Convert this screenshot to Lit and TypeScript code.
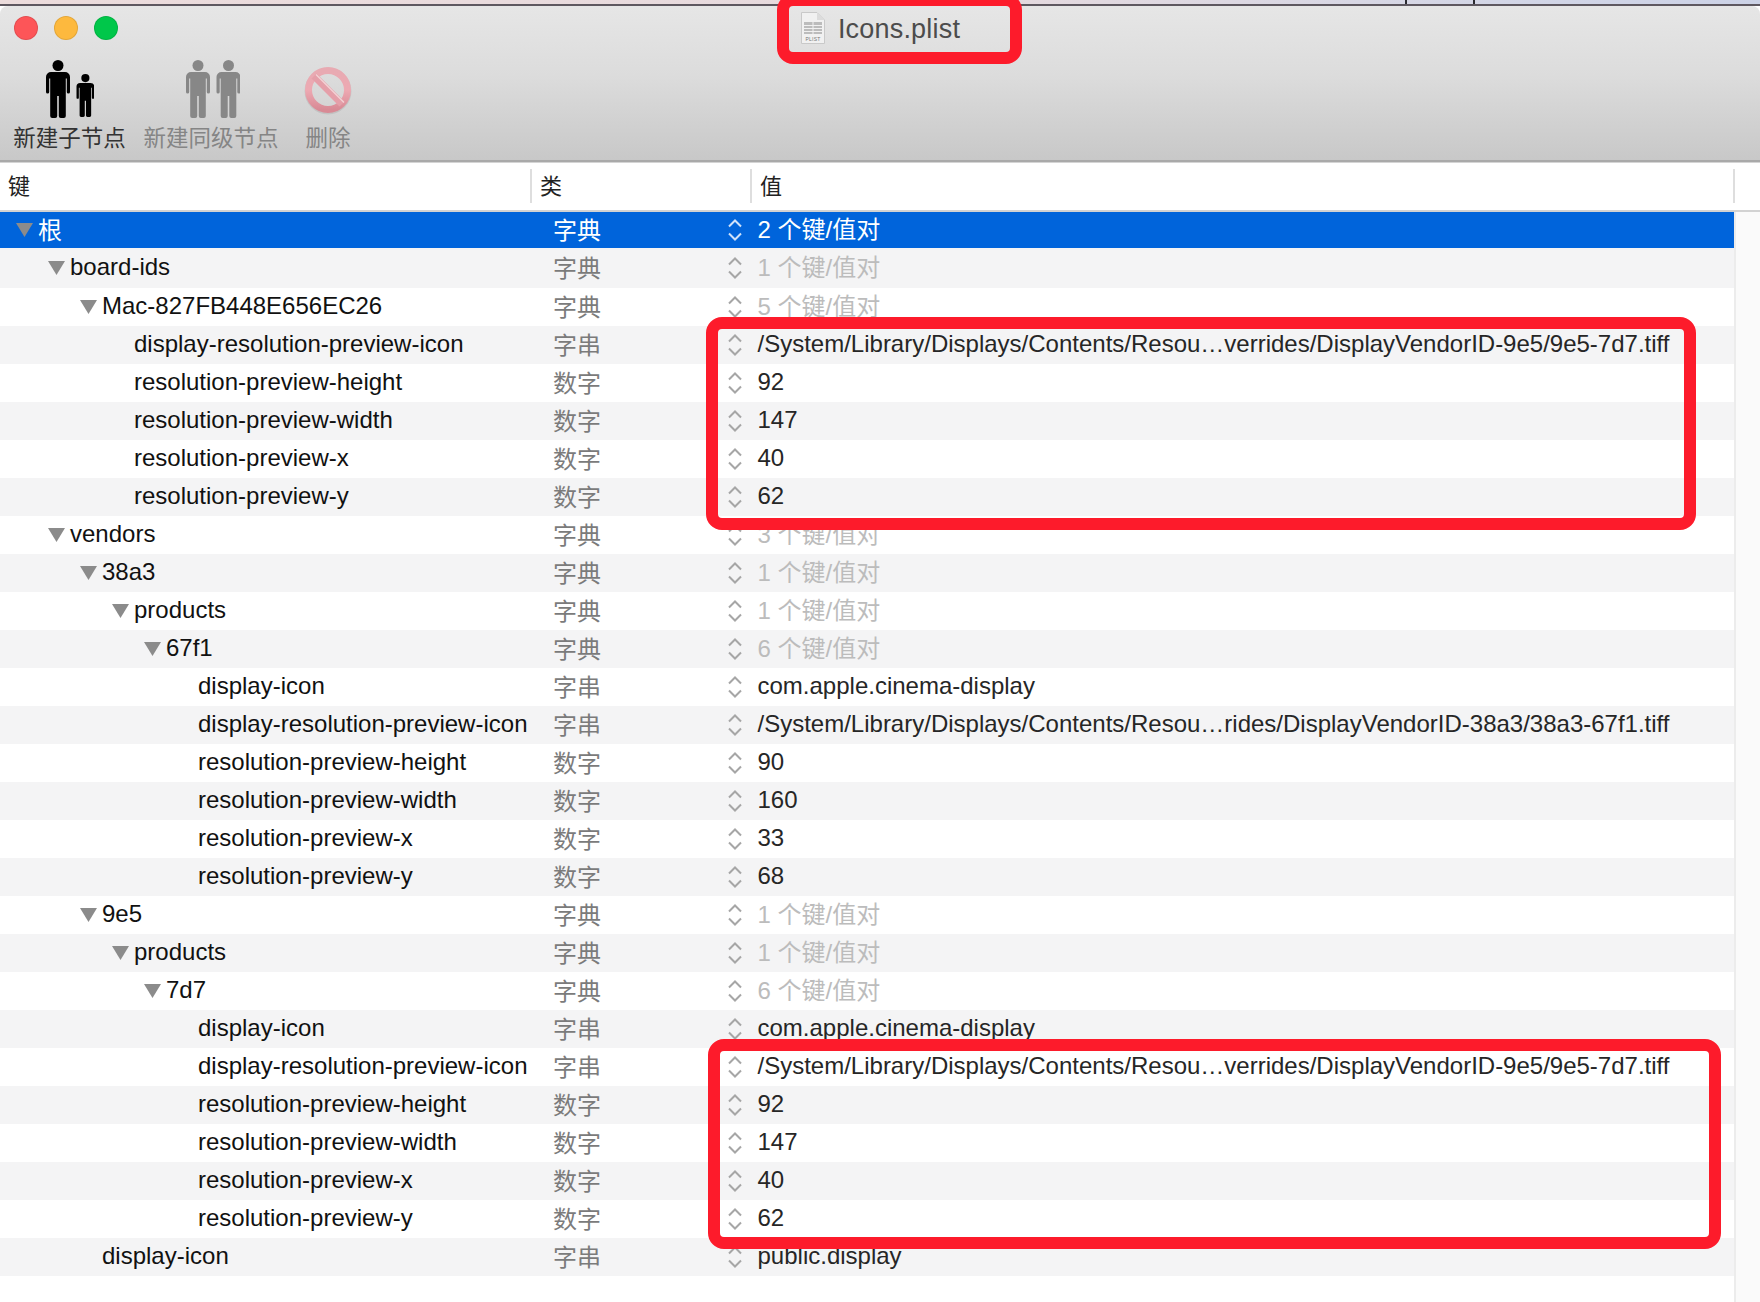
import { LitElement, html, css, svg } from "lit";
import { customElement } from "lit/decorators.js";

type Row = { level: number; open?: boolean; key: string; type: string; value: string; muted?: boolean };

const PATH_9E5 = "/System/Library/Displays/Contents/Resou…verrides/DisplayVendorID-9e5/9e5-7d7.tiff";
const PATH_38A3 = "/System/Library/Displays/Contents/Resou…rides/DisplayVendorID-38a3/38a3-67f1.tiff";
const DICT = "字典";
const STR = "字串";
const NUM = "数字";

const preview = (level: number, path: string, h: string, w: string, x: string, y: string): Row[] => [
    { level, key: "display-resolution-preview-icon", type: STR, value: path },
    { level, key: "resolution-preview-height", type: NUM, value: h },
    { level, key: "resolution-preview-width", type: NUM, value: w },
    { level, key: "resolution-preview-x", type: NUM, value: x },
    { level, key: "resolution-preview-y", type: NUM, value: y },
];

const ROWS: Row[] = [
    { level: 0, open: true, key: "根", type: DICT, value: "2 个键/值对" },
    { level: 1, open: true, key: "board-ids", type: DICT, value: "1 个键/值对", muted: true },
    { level: 2, open: true, key: "Mac-827FB448E656EC26", type: DICT, value: "5 个键/值对", muted: true },
    ...preview(3, PATH_9E5, "92", "147", "40", "62"),
    { level: 1, open: true, key: "vendors", type: DICT, value: "3 个键/值对", muted: true },
    { level: 2, open: true, key: "38a3", type: DICT, value: "1 个键/值对", muted: true },
    { level: 3, open: true, key: "products", type: DICT, value: "1 个键/值对", muted: true },
    { level: 4, open: true, key: "67f1", type: DICT, value: "6 个键/值对", muted: true },
    { level: 5, key: "display-icon", type: STR, value: "com.apple.cinema-display" },
    ...preview(5, PATH_38A3, "90", "160", "33", "68"),
    { level: 2, open: true, key: "9e5", type: DICT, value: "1 个键/值对", muted: true },
    { level: 3, open: true, key: "products", type: DICT, value: "1 个键/值对", muted: true },
    { level: 4, open: true, key: "7d7", type: DICT, value: "6 个键/值对", muted: true },
    { level: 5, key: "display-icon", type: STR, value: "com.apple.cinema-display" },
    ...preview(5, PATH_9E5, "92", "147", "40", "62"),
    { level: 2, key: "display-icon", type: STR, value: "public.display" },
];

const PERSON = "M5 12h14a5 5 0 0 1 5 5v15a1.6 1.6 0 0 1-3.2 0V18.5h-1V56a2 2 0 0 1-2 2h-3a2 2 0 0 1-2-2V36h-1.6V56a2 2 0 0 1-2 2h-3a2 2 0 0 1-2-2V18.5h-1V32a1.6 1.6 0 0 1-3.2 0V17a5 5 0 0 1 5-5z";

const person = (x: number, y: number, scale: number) => svg`
  <g transform="translate(${x} ${y}) scale(${scale})">
    <circle cx="12" cy="5.5" r="5.5"></circle>
    <path d=${PERSON}></path>
  </g>`;

@customElement("app-root")
export class AppRoot extends LitElement {
    static styles = css`
    :host {
      display: block;
      position: relative;
      width: 1760px;
      height: 1302px;
      overflow: hidden;
      background: #fff;
      font-family: "Liberation Sans", "Noto Sans CJK SC", sans-serif;
    }

    .desk {
      height: 4px;
      display: flex;
      background: linear-gradient(90deg, #ecdcdc 0%, #e6dade 55%, #d3d6e6 85%, #ccd2e6 100%);
    }

    .desk-frame {
      width: 66px;
      margin-left: 1405px;
      border: solid #2a2a30;
      border-width: 0 2px;
    }

    .edge {
      height: 2px;
      background: #5e5860;
    }

    .toolbar {
      height: 156px;
      box-sizing: border-box;
      border-top-left-radius: 8px;
      border-top-right-radius: 8px;
      background: linear-gradient(180deg, #e6e6e6 0%, #dcdcdc 45%, #c8c8c8 100%);
      border-bottom: 2px solid #a9a9a9;
      box-shadow: 0 1px 0 #d4d4d4;
    }

    .titlebar {
      display: grid;
      grid-template-columns: 1fr auto 1fr;
      align-items: center;
      height: 44px;
    }

    .lights {
      display: flex;
      gap: 16px;
      padding-left: 14px;
    }

    .light {
      width: 22px;
      height: 22px;
      border-radius: 50%;
      border: 1px solid rgba(0, 0, 0, 0.1);
    }

    .red { background: #fd5558; }
    .yellow { background: #fdb93e; }
    .green { background: #00c74a; }

    .title {
      display: flex;
      align-items: center;
      gap: 13px;
      font-size: 27px;
      letter-spacing: 0.2px;
      color: #4c4c4c;
    }

    .title span { padding-top: 2px; }
    .title svg { margin-left: 1px; }

    .tools {
      display: flex;
      padding-left: 14px;
      margin-top: 10px;
    }

    .tool {
      display: flex;
      flex-direction: column;
      align-items: center;
      gap: 4px;
      font-size: 22.5px;
      line-height: 28px;
      white-space: nowrap;
      color: #858585;
      font-family: "Noto Sans CJK SC", sans-serif;
    }

    .tool.active { color: #333; }
    .tool-1 { width: 111px; margin-right: 19px; }
    .tool-2 { width: 134px; margin-right: 14px; }
    .tool-2 svg { margin-left: 4px; }
    .tool-3 { width: 72px; }
    .tool svg { display: block; }

    .header {
      display: grid;
      grid-template-columns: 530px 220px 983px 1fr;
      height: 48px;
      align-items: center;
      font-size: 22px;
      color: #222;
      border-bottom: 2px solid #d2d2d2;
      font-family: "Noto Sans CJK SC", sans-serif;
    }

    .header-cell {
      height: 34px;
      line-height: 30px;
      padding-left: 8px;
      box-sizing: border-box;
    }

    .header-cell + .header-cell {
      border-left: 2px solid #dedede;
    }

    .body {
      display: flex;
      height: 1090px;
    }

    .rows {
      width: 1734px;
    }

    .scroller {
      flex: 1;
      background: #fafafa;
      border-left: 2px solid #ececec;
    }

    .row {
      display: grid;
      grid-template-columns: 553px 175px 29.5px 1fr;
      align-items: center;
      box-sizing: border-box;
      height: 38px;
      padding-bottom: 2px;
      font-size: 24px;
      color: #111;
      white-space: nowrap;
    }

    .row:nth-child(even) { background: #f4f4f5; }
    .row:first-child { height: 36px; }
    .row:nth-child(2) { height: 40px; }

    .row.selected {
      background: #0064db;
      color: #fff;
    }

    .key {
      display: flex;
      align-items: center;
    }

    .selected .key span { margin-top: -2px; }

    .arrow {
      flex: none;
      margin: 2px 5px 0 0;
    }

    .type {
      color: #7b7b7b;
      margin-top: -2px;
    }

    .value { color: #262626; }

    .value.muted {
      color: #bcbcbc;
      margin-top: -4px;
    }

    .selected .type { color: #fff; }

    .selected .value {
      color: #fff;
      margin-top: -4px;
    }

    .stepper {
      display: block;
      stroke: #a6a6a6;
      margin-top: 2px;
    }

    .selected .stepper { stroke: #cfe2fa; }

    .mark {
      position: absolute;
      box-sizing: border-box;
      border: 12px solid #fd1b2b;
      border-radius: 16px;
    }

    .mark-title { left: 777px; top: -6px; width: 245px; height: 70px; }
    .mark-top { left: 706px; top: 317px; width: 990px; height: 213px; }
    .mark-bottom { left: 708px; top: 1039px; width: 1013px; height: 210px; }
  `;

    private docIcon() {
        return html`<svg width="24" height="32" viewBox="0 0 24 32">
      <path d="M.5.5H16L23.5 8V31.5H.5z" fill="#f1f1f1" stroke="#c9c9c9"></path>
      <path d="M16 .5V8H23.5z" fill="#dcdcdc"></path>
      <g fill="#bcbcbc">
        <rect x="3" y="10" width="18" height="3"></rect>
        <rect x="3" y="14" width="18" height="2"></rect>
        <rect x="3" y="17" width="18" height="2"></rect>
        <rect x="3" y="20" width="18" height="2"></rect>
      </g>
      <path d="M12 10V22" stroke="#f1f1f1"></path>
      <text x="12" y="29" text-anchor="middle" font-size="5" fill="#777" font-family="Liberation Sans, sans-serif">PLIST</text>
    </svg>`;
    }

    private noEntryIcon() {
        return html`<svg width="50" height="58" viewBox="0 0 50 58">
      <defs>
        <linearGradient id="ring" x1="0" y1="0" x2="0" y2="1">
          <stop offset="0" stop-color="#e8aab2"></stop>
          <stop offset="0.5" stop-color="#eda9b2"></stop>
          <stop offset="1" stop-color="#d88a95"></stop>
        </linearGradient>
        <filter id="soft" x="-10%" y="-10%" width="120%" height="120%">
          <feGaussianBlur stdDeviation="0.6"></feGaussianBlur>
        </filter>
      </defs>
      <g filter="url(#soft)">
        <circle cx="25" cy="31" r="22" fill="none" stroke="#000" stroke-opacity="0.08" stroke-width="3"></circle>
        <circle cx="25" cy="30" r="19.500" fill="none" stroke="url(#ring)" stroke-width="7"></circle>
        <path d="M11 16L39 44" stroke="#e59fa9" stroke-width="7"></path>
        <path d="M13 14.500L41 42.500" stroke="#f3d3d6" stroke-width="1.200"></path>
      </g>
    </svg>`;
    }

    private stepper() {
        return html`<svg class="stepper" width="14" height="22" viewBox="0 0 14 22" fill="none" stroke-width="2">
      <path d="M1 7.5L7 1.5L13 7.5"></path>
      <path d="M1 14.5L7 20.5L13 14.5"></path>
    </svg>`;
    }

    private renderRow(row: Row, index: number) {
        const pad = row.open ? 16 + row.level * 32 : 38 + row.level * 32;
        return html`<div class="row ${index === 0 ? "selected" : ""}">
      <div class="key" style="padding-left:${pad}px">
        ${row.open
            ? html`<svg class="arrow" width="17" height="14" viewBox="0 0 17 14"><path d="M0 0H17L8.500 14z" fill="#8b8b8b"></path></svg>`
            : ""}
        <span>${row.key}</span>
      </div>
      <div class="type">${row.type}</div>
      ${this.stepper()}
      <div class="value ${row.muted ? "muted" : ""}">${row.value}</div>
    </div>`;
    }

    render() {
        return html`
      <div class="desk"><div class="desk-frame"></div></div>
      <div class="edge"></div>
      <div class="toolbar">
        <div class="titlebar">
          <div class="lights">
            <div class="light red"></div>
            <div class="light yellow"></div>
            <div class="light green"></div>
          </div>
          <div class="title">${this.docIcon()}<span>Icons.plist</span></div>
        </div>
        <div class="tools">
          <div class="tool tool-1 active">
            <svg width="48" height="58" viewBox="0 0 48 58" fill="#000">
              ${person(0, 0, 1)}${person(30.500, 14, 0.74)}
            </svg>
            新建子节点
          </div>
          <div class="tool tool-2">
            <svg width="54" height="58" viewBox="0 0 54 58" fill="#878787">
              ${person(0, 0, 1)}${person(30.500, 0, 1)}
            </svg>
            新建同级节点
          </div>
          <div class="tool tool-3">
            <div>${this.noEntryIcon()}</div>
            删除
          </div>
        </div>
      </div>
      <div class="header">
        <div class="header-cell">键</div>
        <div class="header-cell">类</div>
        <div class="header-cell">值</div>
        <div class="header-cell"></div>
      </div>
      <div class="body">
        <div class="rows">${ROWS.map((r, i) => this.renderRow(r, i))}</div>
        <div class="scroller"></div>
      </div>
      <div class="mark mark-title"></div>
      <div class="mark mark-top"></div>
      <div class="mark mark-bottom"></div>
    `;
    }
}

declare global {
    interface HTMLElementTagNameMap {
        "app-root": AppRoot;
    }
}
